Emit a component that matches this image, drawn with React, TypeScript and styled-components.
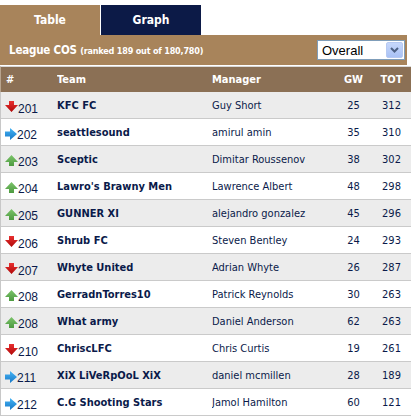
import React from "react";
import styled, { createGlobalStyle } from "styled-components";

const Global = createGlobalStyle`
  html, body { margin: 0; padding: 0; background: #fff; }
  body { font-family: "DejaVu Sans Condensed", "DejaVu Sans", sans-serif; }
`;

const Wrap = styled.div`
  width: 411px;
  padding-top: 5px;
`;

const Tabs = styled.div`
  display: flex;
  gap: 1px;
`;

const Tab = styled.div<{ $active?: boolean }>`
  width: 100px;
  height: 30px;
  display: flex;
  align-items: center;
  justify-content: center;
  background: ${(p) => (p.$active ? "#a8845b" : "#0c1a47")};
  color: #fff;
  font-weight: bold;
  font-size: 12px;
`;

const Bar = styled.div`
  width: 407px;
  height: 30px;
  box-sizing: border-box;
  background: #a8845b;
  display: flex;
  align-items: center;
  justify-content: space-between;
  padding: 0 2px 0 9px;
`;

const Title = styled.div`
  color: #fff;
  font-weight: bold;
  font-size: 11.5px;
  white-space: nowrap;
  letter-spacing: -0.2px;
`;

const Sub = styled.span`
  font-size: 9px;
  letter-spacing: -0.2px;
`;

const Select = styled.div`
  width: 88px;
  height: 20px;
  box-sizing: border-box;
  background: #fff;
  border: 1px solid #7f9db9;
  display: flex;
  align-items: stretch;
  font-family: "Liberation Sans", sans-serif;
  font-size: 13px;
  color: #000;
`;

const SelectText = styled.div`
  flex: 1;
  padding-left: 4px;
  display: flex;
  align-items: center;
`;

const SelectBtn = styled.div`
  width: 15px;
  margin: 1px;
  background: linear-gradient(#c6d7fb, #a9c2f5);
  border: 1px solid #b6c9f2;
  border-radius: 2px;
  display: flex;
  align-items: center;
  justify-content: center;
`;

const Table = styled.div`
  margin-top: 1px;
  border-left: 1px solid #c8c8c8;
  width: 410px;
`;

const Grid = styled.div<{ $bg: string }>`
  display: grid;
  grid-template-columns: 56px 155px 1fr 37px 39px;
  align-items: center;
  background: ${(p) => p.$bg};
`;

const Head = styled(Grid)`
  height: 25px;
  color: #fff;
  font-weight: bold;
  font-size: 11px;
  border-top: 1px solid #d8d8d8;
  border-left: 1px solid #b8a48e;
  margin-left: -1px;
`;

const Row = styled(Grid)`
  height: 26px;
  border-bottom: 1px solid #cacaca;
  color: #0a1a4a;
  font-size: 11px;
`;

const Cell = styled.div<{ $center?: boolean; $bold?: boolean }>`
  text-align: ${(p) => (p.$center ? "center" : "left")};
  font-weight: ${(p) => (p.$bold ? "bold" : "inherit")};
  white-space: nowrap;
  overflow: hidden;
`;

const HashCell = styled(Cell)`
  padding-left: 5px;
`;

const Rank = styled.div`
  display: flex;
  align-items: flex-end;
  padding-left: 4px;
  padding-top: 6px;
  font-family: "Liberation Sans", sans-serif;
  font-size: 12px;
`;

type Move = "up" | "down" | "same";

const Arrow = ({ move }: { move: Move }) => {
  if (move === "down")
    return (
      <svg width="13" height="11" viewBox="0 0 13 11" style={{ marginBottom: 4 }}>
        <defs>
          <linearGradient id="gr" x1="0" y1="0" x2="0" y2="1">
            <stop offset="0" stopColor="#e83030" />
            <stop offset="1" stopColor="#b00808" />
          </linearGradient>
        </defs>
        <path d="M4 0h5v4h4l-6.5 7L0 4h4z" fill="url(#gr)" />
      </svg>
    );
  if (move === "up")
    return (
      <svg width="13" height="11" viewBox="0 0 13 11" style={{ marginBottom: 3 }}>
        <defs>
          <linearGradient id="gg" x1="0" y1="0" x2="0" y2="1">
            <stop offset="0" stopColor="#7cc46a" />
            <stop offset="1" stopColor="#4d9a40" />
          </linearGradient>
        </defs>
        <path d="M4 11h5V7h4L6.5 0 0 7h4z" fill="url(#gg)" />
      </svg>
    );
  return (
    <svg width="12" height="12" viewBox="0 0 12 12" style={{ marginBottom: 2 }}>
      <defs>
        <linearGradient id="gb" x1="0" y1="0" x2="0" y2="1">
          <stop offset="0" stopColor="#46b4f4" />
          <stop offset="1" stopColor="#1778c8" />
        </linearGradient>
      </defs>
      <path d="M0 3.5h5V0l7 6-7 6V8.5H0z" fill="url(#gb)" />
    </svg>
  );
};

const rows: [Move, number, string, string, number, number][] = [
  ["down", 201, "KFC FC", "Guy Short", 25, 312],
  ["same", 202, "seattlesound", "amirul amin", 35, 310],
  ["up", 203, "Sceptic", "Dimitar Roussenov", 38, 302],
  ["up", 204, "Lawro's Brawny Men", "Lawrence Albert", 48, 298],
  ["up", 205, "GUNNER XI", "alejandro gonzalez", 45, 296],
  ["down", 206, "Shrub FC", "Steven Bentley", 24, 293],
  ["down", 207, "Whyte United", "Adrian Whyte", 26, 287],
  ["up", 208, "GerradnTorres10", "Patrick Reynolds", 30, 263],
  ["up", 208, "What army", "Daniel Anderson", 62, 263],
  ["down", 210, "ChriscLFC", "Chris Curtis", 19, 261],
  ["same", 211, "XiX LiVeRpOoL XiX", "daniel mcmillen", 28, 189],
  ["same", 212, "C.G Shooting Stars", "Jamol Hamilton", 60, 121],
];

export default function App() {
  return (
    <Wrap>
      <Global />
      <Tabs>
        <Tab $active>Table</Tab>
        <Tab>Graph</Tab>
      </Tabs>
      <Bar>
        <Title>
          League COS <Sub>(ranked 189 out of 180,780)</Sub>
        </Title>
        <Select>
          <SelectText>Overall</SelectText>
          <SelectBtn>
            <svg width="9" height="6" viewBox="0 0 9 6">
              <path d="M1 1l3.5 3.5L8 1" stroke="#4d6185" strokeWidth="2" fill="none" />
            </svg>
          </SelectBtn>
        </Select>
      </Bar>
      <Table>
        <Head $bg="#8b7055">
          <HashCell>#</HashCell>
          <Cell>Team</Cell>
          <Cell>Manager</Cell>
          <Cell $center>GW</Cell>
          <Cell $center>TOT</Cell>
        </Head>
        {rows.map(([m, r, team, mgr, gw, tot], i) => (
          <Row key={i} $bg={i % 2 === 0 ? "#ececec" : "#ffffff"}>
            <Rank>
              <Arrow move={m} />
              <span>{r}</span>
            </Rank>
            <Cell $bold>{team}</Cell>
            <Cell>{mgr}</Cell>
            <Cell $center>{gw}</Cell>
            <Cell $center>{tot}</Cell>
          </Row>
        ))}
      </Table>
    </Wrap>
  );
}
